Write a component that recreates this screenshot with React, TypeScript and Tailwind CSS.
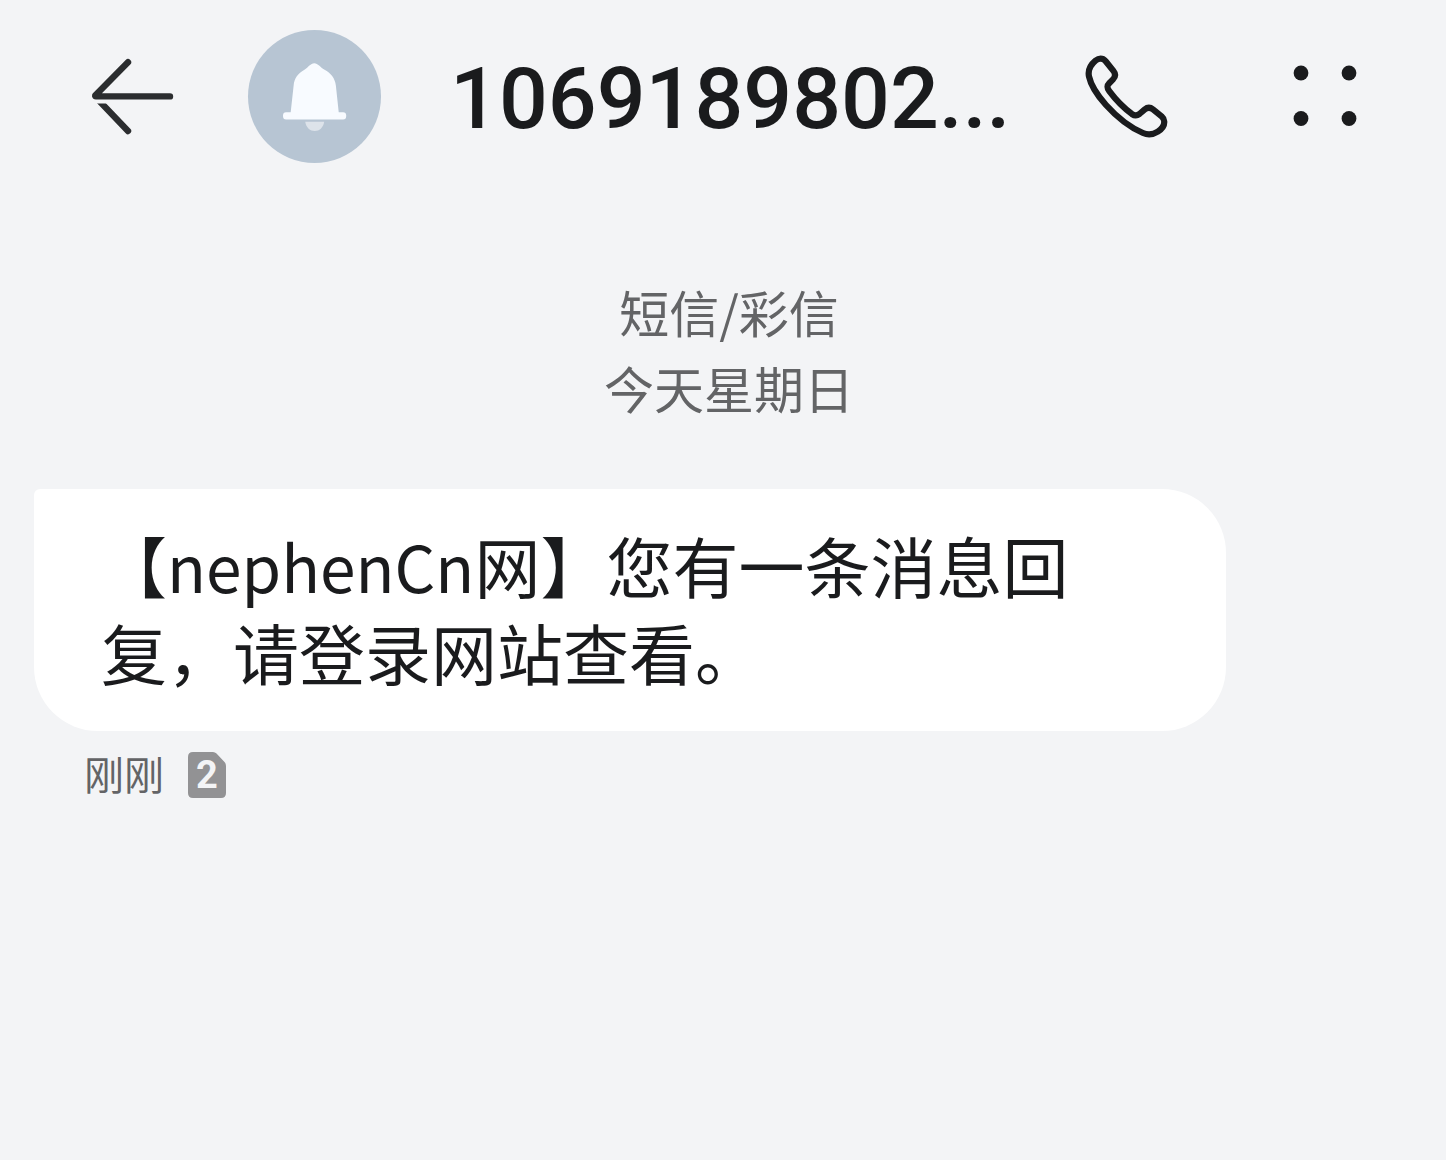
function BackIcon() {
  return (
    <svg width="86" height="82" viewBox="0 0 86 82" fill="none" aria-hidden="true">
      <clipPath id="lower-stroke">
        <rect x="0" y="47.5" width="86" height="35" />
      </clipPath>
      <g stroke="#2b2d2f" strokeWidth="6.4" strokeLinecap="round" strokeLinejoin="round">
        <path d="M38 6.2L5.2 39.6Q5 40.4 6 40.4H80" />
        <path d="M6 41.5L38 75" clipPath="url(#lower-stroke)" />
      </g>
    </svg>
  );
}

function BellIcon() {
  return (
    <svg viewBox="0 0 132 132" className="w-full h-full" aria-hidden="true">
      <path
        d="M65.8 33C62 33 60 37 56 39.5C49.5 43 46 48 45.3 55L42.2 83H90.2L87.2 55C86.4 48 82 42.5 76 39.5C71.5 37 69.5 33 65.8 33Z"
        fill="#f8fbff"
      />
      <rect x="34.8" y="81.7" width="62.6" height="7.2" rx="3" fill="#f8fbff" />
      <path d="M56.8 91H75.6C74.6 97 70.8 100.2 66.2 100.2C61.6 100.2 57.8 97 56.8 91Z" fill="#dde3ea" />
    </svg>
  );
}

function PhoneIcon() {
  return (
    <svg width="86" height="86" viewBox="0 0 86 86" fill="none" aria-hidden="true">
      <path
        d="M21.5 7C18.5 3.6 14.8 4 11.5 6.6C6.5 10.8 3.6 15.8 5 22.5C6.8 31 13.5 41.5 22 51C33 63.2 46 73.5 59 79C64.5 81.3 69 80.6 73.8 77.6C77.5 75.3 80.6 71.2 80.2 67.2C80 65 79.2 63.8 77.6 62.4L69 55.4C66.2 53.2 63.4 53.3 60.8 55.4L55.4 60C53 61.9 50.6 61.9 48 60.1C40 54.2 31.5 45.5 25.3 37.2C23 34 22.6 31.8 25.2 29.2L29 25.3C31.8 22.4 31.6 19.6 29.4 16.8Z"
        stroke="#1a1b1d"
        strokeWidth="6.2"
        strokeLinejoin="round"
      />
    </svg>
  );
}

function MoreIcon() {
  return (
    <svg width="64" height="64" viewBox="0 0 64 64" fill="#1a1b1d" aria-hidden="true">
      <circle cx="8" cy="8" r="7.4" />
      <circle cx="56" cy="8" r="7.4" />
      <circle cx="8" cy="53.5" r="7.4" />
      <circle cx="56" cy="53.5" r="7.4" />
    </svg>
  );
}

// sim card slot the message came in on
function SimBadge({ slot }: { slot: number }) {
  return (
    <span className="relative flex justify-center items-center w-[38px] h-[46px]">
      <svg viewBox="0 0 38 46" className="absolute inset-0" aria-hidden="true">
        <path
          d="M5 0H25Q27 0 28.5 1.5L36.5 10Q38 11.5 38 14V41Q38 46 33 46H5Q0 46 0 41V5Q0 0 5 0Z"
          fill="#929294"
        />
      </svg>
      <span className="relative font-['Roboto',sans-serif] text-[38px] leading-none font-bold text-[#f3f4f6]">
        {slot}
      </span>
    </span>
  );
}

export default function App() {
  return (
    <div className="min-h-screen bg-[#f3f4f6] font-['Noto_Sans_CJK_SC',sans-serif] text-[#1a1b1d]">
      <header className="flex items-center pt-[30px] pl-[90px] pr-[89px]">
        <button aria-label="返回" className="shrink-0">
          <BackIcon />
        </button>
        <div className="shrink-0 ml-[72px] w-[133px] h-[133px] rounded-full bg-[#b7c5d3]">
          <BellIcon />
        </div>
        <h1 className="flex-1 ml-[69px] pt-1 whitespace-nowrap font-['Roboto',sans-serif] text-[86px] leading-[100px] font-medium">
          1069189802...
        </h1>
        <button aria-label="拨打电话" className="shrink-0">
          <PhoneIcon />
        </button>
        <button aria-label="更多" className="shrink-0 ml-[123px]">
          <MoreIcon />
        </button>
      </header>

      <main className="pt-[110px]">
        <div className="pl-3 text-center text-[50px] leading-[76px] text-[#636466]">
          <p>短信/彩信</p>
          <p>今天星期日</p>
        </div>

        <div className="mt-16 ml-[34px] mr-[220px]">
          <p className="px-[67px] pt-8 pb-[37px] rounded-[64px] rounded-tl-md bg-white text-[66px] leading-[86px]">
            【<span className="text-[64px]">nephenCn</span>网】您有一条消息回复，请登录网站查看。
          </p>
          <div className="flex items-center gap-6 mt-[21px] pl-[50px]">
            <time className="pb-1 text-[40px] leading-[42px] text-[#636466]">刚刚</time>
            <SimBadge slot={2} />
          </div>
        </div>
      </main>
    </div>
  );
}
